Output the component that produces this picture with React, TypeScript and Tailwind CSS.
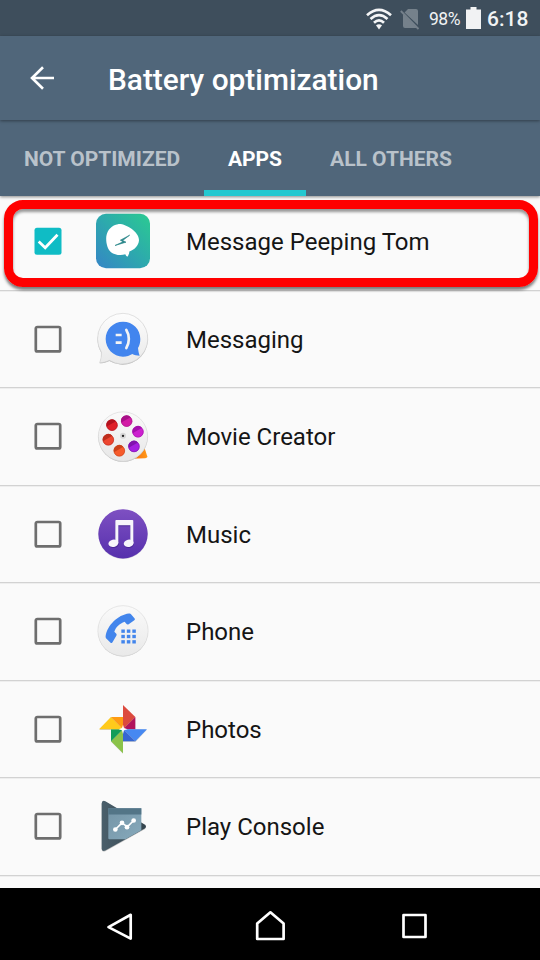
import type { ReactNode } from "react";

function MessagePeepingTomIcon() {
  return (
    <svg className="size-[60px]" viewBox="279 64.5 180 180">
      <defs>
        <linearGradient id="mpt" x1="0" y1="1" x2="1" y2="0">
          <stop offset="0" stopColor="#3585c6" />
          <stop offset="0.5" stopColor="#2da9ad" />
          <stop offset="1" stopColor="#2bcb91" />
        </linearGradient>
      </defs>
      <rect x="288" y="73" width="162" height="163" rx="30" fill="url(#mpt)" />
      <path
        d="M354 104C376 101 418 128 417 152C416 168 403 181 388 186C388 191 386 197 382 202C379 200 377 197 376 194C362 199 344 196 333 188C322 179 317 157 319 140C322 121 336 106 354 104Z"
        fill="#fff"
      />
      <path d="M389 137L361 152L369 157L345 168L378 158L368 153Z" fill="#29868a" stroke="#29868a" strokeWidth="2" />
    </svg>
  );
}

function MessagingIcon() {
  return (
    <svg className="size-[60px]" viewBox="219 27 180 180">
      <defs>
        <linearGradient id="msgPlate" x1="0" y1="0" x2="0" y2="1">
          <stop offset="0" stopColor="#fdfdfd" />
          <stop offset="1" stopColor="#e9e9e9" />
        </linearGradient>
      </defs>
      <path
        d="M309 40A76 76 0 1 1 268 181C259 186 248 188 239 188C243 178 245 166 244 156A76 76 0 0 1 309 40Z"
        fill="#b5b5b5"
        transform="translate(0 2)"
      />
      <path
        d="M309 40A76 76 0 1 1 268 181C259 186 248 188 239 188C243 178 245 166 244 156A76 76 0 0 1 309 40Z"
        fill="url(#msgPlate)"
        stroke="#d3d3d3"
        strokeWidth="2"
      />
      <path
        d="M309 65C339 65 361 88 361 117C361 127 359 136 354 144C355 152 356 160 359 167C351 167 343 165 337 162C329 167 320 170 309 170C280 170 257 146 257 117C257 88 280 65 309 65Z"
        fill="#4285ee"
      />
      <path d="M287 105H305M287 128H305" stroke="#f4f4f4" strokeWidth="8" />
      <path d="M319 90C329 106 329 128 319 144" fill="none" stroke="#f4f4f4" strokeWidth="8" strokeLinecap="round" />
    </svg>
  );
}

const reelHoles = [
  { x: 96, y: 77, light: "#df2028", dark: "#b3121d" },
  { x: 140, y: 65, light: "#d21ba5", dark: "#a90f88" },
  { x: 174, y: 97, light: "#cc20cf", dark: "#a50fac" },
  { x: 162, y: 141, light: "#a41fe0", dark: "#8013ae" },
  { x: 118, y: 154, light: "#f65b2b", dark: "#ca4219" },
  { x: 85, y: 121, light: "#ed4630", dark: "#be2d1c" },
];

function MovieCreatorIcon() {
  return (
    <svg className="size-[60px]" viewBox="39 19.5 180 180">
      <defs>
        <linearGradient id="reel" x1="0" y1="0" x2="0" y2="1">
          <stop offset="0" stopColor="#fafafa" />
          <stop offset="1" stopColor="#e7e7e7" />
        </linearGradient>
        <linearGradient id="film" x1="0" y1="0" x2="1" y2="0">
          <stop offset="0" stopColor="#f4600f" />
          <stop offset="1" stopColor="#ff9a18" />
        </linearGradient>
      </defs>
      <path d="M150 178L192 140L202 171Q203 175 196 176Z" fill="url(#film)" />
      <circle cx="129" cy="113" r="74" fill="#b7b7b7" />
      <circle cx="129" cy="111" r="74" fill="url(#reel)" stroke="#dadada" strokeWidth="2" />
      {reelHoles.map((h) => (
        <g key={h.x}>
          <circle cx={h.x} cy={h.y} r="16.5" fill={h.light} />
          <path
            d={`M${h.x - 16} ${h.y + 4}A16.5 16.5 0 0 1 ${h.x + 12} ${h.y - 12}Z`}
            fill={h.dark}
          />
          <circle cx={h.x} cy={h.y} r="16" fill="none" stroke={h.dark} strokeWidth="2" />
        </g>
      ))}
      <circle cx="129" cy="109" r="9" fill="#d6d6d6" />
      <circle cx="129" cy="109" r="3.5" fill="#222" />
    </svg>
  );
}

function MusicIcon() {
  return (
    <svg className="size-[60px]" viewBox="39 27 180 180">
      <defs>
        <linearGradient id="music" x1="0" y1="0" x2="0" y2="1">
          <stop offset="0" stopColor="#7e50c2" />
          <stop offset="1" stopColor="#5630ad" />
        </linearGradient>
      </defs>
      <circle cx="129" cy="118" r="74" fill="#c9c3d6" />
      <circle cx="129" cy="116.500" r="74" fill="url(#music)" />
      <g transform="translate(0 3)" fill="#4a2796">
        <path d="M106 75H160V145H151V91H115V145H106Z" />
        <ellipse cx="101" cy="145" rx="15" ry="11" />
        <ellipse cx="146" cy="145" rx="15" ry="11" />
      </g>
      <g fill="#f7f5fb">
        <path d="M109 75H157Q160 75 160 78V145H151V91H115V145H106V78Q106 75 109 75Z" />
        <ellipse cx="100" cy="145" rx="15" ry="11" transform="rotate(-12 100 145)" />
        <ellipse cx="146" cy="145" rx="15" ry="11" transform="rotate(-12 146 145)" />
      </g>
    </svg>
  );
}

const keypad = [0, 1, 2, 3, 4, 5, 6, 7, 8];

function PhoneIcon() {
  return (
    <svg className="size-[60px]" viewBox="39 34.5 180 180">
      <defs>
        <linearGradient id="phonePlate" x1="0" y1="0" x2="0" y2="1">
          <stop offset="0" stopColor="#fafafa" />
          <stop offset="1" stopColor="#e9e9e9" />
        </linearGradient>
      </defs>
      <circle cx="129" cy="126" r="75" fill="#bdbdbd" />
      <circle cx="129" cy="124" r="75.500" fill="url(#phonePlate)" stroke="#dcdcdc" strokeWidth="2" />
      <path
        d="M147 72Q151 71 153 74L164 87Q166 90 163 92L146 104Q142 106 139 103L134 97C119 102 107 114 103 127L109 133Q111 136 109 139L97 159Q94 162 91 159L78 146Q76 143 77 139C82 108 113 76 147 72Z"
        fill="#4285ec"
      />
      {keypad.map((k) => (
        <rect
          key={k}
          x={124 + (k % 3) * 16.5}
          y={120 + Math.floor(k / 3) * 16}
          width="10.500"
          height="10"
          fill="#4285ec"
        />
      ))}
    </svg>
  );
}

function PhotosIcon() {
  return (
    <svg className="size-[60px]" viewBox="39 27 180 180">
      <path d="M129 49L166 83V118L200 120L166 156H129V191L93 155V120H58L93 82H129Z" fill="#cfcfcf" />
      <path d="M129 45L166 81L129 118Z" fill="#dc4a3e" />
      <path d="M166 81V118H129Z" fill="#b1145c" />
      <path d="M129 118H201L166 154Z" fill="#4688f1" />
      <path d="M129 118L166 154H129Z" fill="#3667d1" />
      <path d="M129 118V190L93 154Z" fill="#8bc34a" />
      <path d="M129 118L93 154V118Z" fill="#109d58" />
      <path d="M57 118L93 81L129 118Z" fill="#ffca1b" />
      <path d="M93 81H129V118Z" fill="#ff9b12" />
      <path d="M129 104L132 114L143 118L132 121L129 132L126 121L116 118L126 114Z" fill="#fff" />
    </svg>
  );
}

function PlayConsoleIcon() {
  return (
    <svg className="size-[60px]" viewBox="39 34.5 180 180">
      <defs>
        <linearGradient id="consoleTri" x1="0" y1="0" x2="1" y2="0">
          <stop offset="0" stopColor="#4a5f6b" />
          <stop offset="1" stopColor="#34444d" />
        </linearGradient>
        <linearGradient id="consolePane" x1="0" y1="0" x2="1" y2="1">
          <stop offset="0" stopColor="#7595a7" />
          <stop offset="1" stopColor="#86a9bb" />
        </linearGradient>
      </defs>
      <path d="M65 57Q65 46 76 50L194 120Q202 126 194 132L76 198Q65 202 65 192Z" fill="#bdbdbd" transform="translate(0 2)" />
      <path d="M65 57Q65 46 76 50L194 120Q202 126 194 132L76 198Q65 202 65 192Z" fill="url(#consoleTri)" />
      <path d="M85 71H184V137L136 164H88Q85 164 85 161Z" fill="url(#consolePane)" />
      <path d="M85 71H184V90H85Z" fill="#537587" />
      <path d="M106 135L126 115L142 127L161 108" fill="none" stroke="#fff" strokeWidth="5" />
      <g fill="#fff">
        <circle cx="106" cy="135" r="7" />
        <circle cx="126" cy="115" r="7" />
        <circle cx="141" cy="128" r="7" />
        <circle cx="161" cy="108" r="7" />
      </g>
    </svg>
  );
}

const apps: { name: string; icon: ReactNode; checked?: boolean }[] = [
  { name: "Message Peeping Tom", icon: <MessagePeepingTomIcon />, checked: true },
  { name: "Messaging", icon: <MessagingIcon /> },
  { name: "Movie Creator", icon: <MovieCreatorIcon /> },
  { name: "Music", icon: <MusicIcon /> },
  { name: "Phone", icon: <PhoneIcon /> },
  { name: "Photos", icon: <PhotosIcon /> },
  { name: "Play Console", icon: <PlayConsoleIcon /> },
];

function Checkbox({ checked }: { checked?: boolean }) {
  return (
    <svg className="size-7 shrink-0" viewBox="0 0 28 28" role="checkbox" aria-checked={!!checked}>
      {checked ? (
        <>
          <rect x="0.500" y="0.800" width="27" height="27" rx="2.500" fill="#0fbcc5" />
          <path d="M4.700 14.600L11.200 20.800L23.500 7.800" fill="none" stroke="#fff" strokeWidth="2.800" />
        </>
      ) : (
        <rect x="1.800" y="2" width="24.400" height="24.400" rx="1.500" fill="none" stroke="#6e6e6e" strokeWidth="2.700" />
      )}
    </svg>
  );
}

function StatusBar() {
  return (
    <div className="flex h-9 shrink-0 items-center bg-[#3e4e5c] pl-[366px] text-[#f1f3f4]">
      <svg className="mt-px h-[22px] w-[26px] shrink-0" viewBox="0 0 26 22">
        <g fill="none" stroke="#f4f5f6" strokeWidth="2.700">
          <path d="M1 7.200Q13 -3.600 25 7.200" />
          <path d="M4.500 11Q13 3.200 21.500 11" />
          <path d="M8 14.800Q13 10 18 14.800" />
        </g>
        <path d="M10 17.300Q13 15.300 16 17.300L13 21.500Z" fill="#f4f5f6" />
      </svg>
      <svg className="ml-2 mt-px h-[22px] w-5 shrink-0" viewBox="0 0 20 22">
        <path d="M8 1H16Q18 1 18 3V17L4.500 4.500ZM3 6L17 20H5Q3 20 3 18Z" fill="#75818b" />
        <path d="M0.800 3L18.500 21" stroke="#75818b" strokeWidth="1.800" />
      </svg>
      <span className="ml-[9px] mt-[3px] w-[33px] shrink-0 whitespace-nowrap text-[17.500px] leading-none tracking-[-0.500px]">98%</span>
      <svg className="ml-1 h-[22px] w-[15px] shrink-0" viewBox="0 0 15 22">
        <path d="M4.500 0H10.500V2.500H15V22H0V2.500H4.500Z" fill="#f1f2f3" />
      </svg>
      <span className="ml-[6px] mt-[3px] whitespace-nowrap text-[21px] font-medium leading-none">6:18</span>
    </div>
  );
}

function AppBar() {
  return (
    <header className="z-20 flex h-[84px] shrink-0 items-center bg-[#50667a] pl-[30px] shadow-[0_1px_3px_rgba(0,0,0,0.4)]">
      <svg className="h-6 w-6" viewBox="0 0 24 24">
        <path d="M24 12H2M13 1.200L2 12L13 22.800" fill="none" stroke="#fff" strokeWidth="2.600" />
      </svg>
      <h1 className="ml-[54px] mt-[4px] whitespace-nowrap text-[29.850px] font-medium leading-none text-white">Battery optimization</h1>
    </header>
  );
}

function Tabs() {
  return (
    <nav className="z-10 flex h-[76px] shrink-0 bg-[#50667a] text-[21px] font-bold leading-none text-[#b9c2ca] shadow-[0_1px_3px_rgba(0,0,0,0.45)]">
      <span className="flex w-[204px] items-center justify-center pt-[2px]">NOT OPTIMIZED</span>
      <span className="flex w-[102px] items-center justify-center border-b-[6px] border-[#23c8d0] pt-[8px] text-white">APPS</span>
      <span className="flex w-[170px] items-center justify-center pt-[2px]">ALL OTHERS</span>
    </nav>
  );
}

export default function App() {
  return (
    <div className="relative flex h-[960px] w-[540px] flex-col overflow-hidden bg-[#fafafa] font-['Roboto',sans-serif]">
      <StatusBar />
      <AppBar />
      <Tabs />
      <ul className="-mt-[3px] h-[695px] shrink-0 overflow-hidden bg-[#fafafa]">
        {apps.map((app) => (
          <li key={app.name} className="flex h-[97.500px] items-center border-b border-[#d2d2d2] pl-[34px] shadow-[0_1px_0_#eeeeee]">
            <Checkbox checked={app.checked} />
            <span className="ml-[31px] shrink-0">{app.icon}</span>
            <span className="ml-[33px] whitespace-nowrap pt-0.5 text-[24px] leading-none text-[#151515]">{app.name}</span>
          </li>
        ))}
      </ul>
      <footer className="flex h-[72px] shrink-0 items-center bg-black pl-[106px] pt-[3px]">
        <svg className="h-[30px] w-[28px]" viewBox="0 0 28 30">
          <path d="M2.500 17.500L24.700 5.200V29Z" transform="translate(0 -1.400)" fill="none" stroke="#fff" strokeWidth="2.700" strokeLinejoin="round" />
        </svg>
        <svg className="ml-[121px] h-[32px] w-[31px]" viewBox="0 0 31 32">
          <path d="M2.200 13.500L15.400 2.300L28.600 13.500V29H2.200Z" fill="none" stroke="#fff" strokeWidth="2.700" strokeLinejoin="round" />
        </svg>
        <svg className="ml-[115px] h-[26px] w-[26px]" viewBox="0 0 26 26">
          <rect x="2.500" y="2" width="22" height="22" fill="none" stroke="#fff" strokeWidth="2.700" strokeLinejoin="round" />
        </svg>
      </footer>
      <div className="absolute left-[4px] top-[200px] z-20 h-[87px] w-[534px] rounded-[19px] border-[9px] border-[#ff0000] shadow-[0_3px_3px_rgba(0,0,0,0.5),inset_0_3px_3px_rgba(0,0,0,0.4)]" />
    </div>
  );
}
